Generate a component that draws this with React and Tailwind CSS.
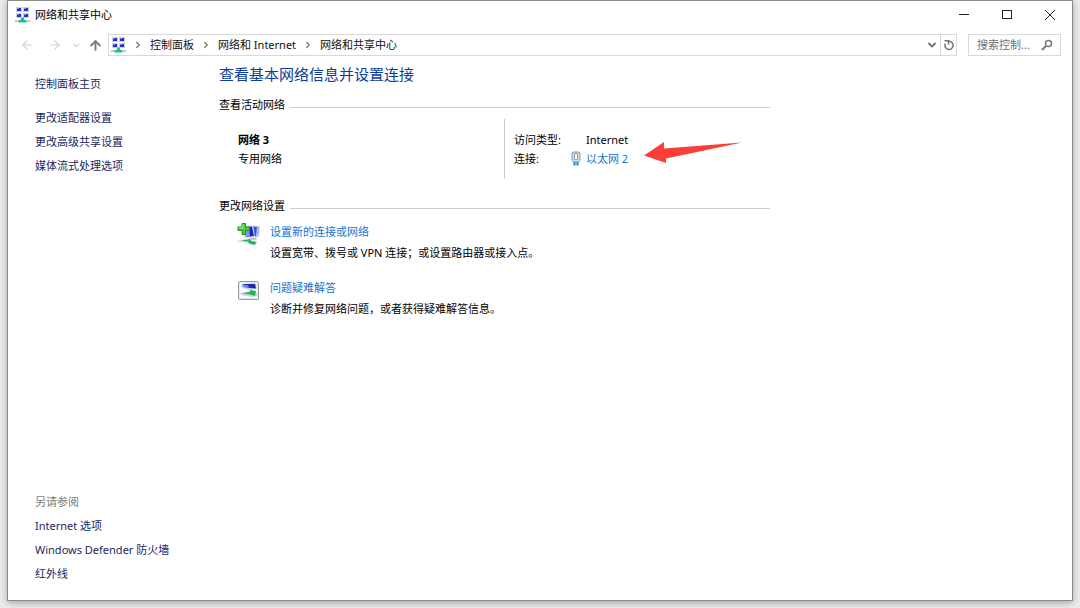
import { ArrowLeft, ArrowRight, ArrowUp, ChevronDown, ChevronRight } from 'lucide-react'

const NAV_LINKS = ['更改适配器设置', '更改高级共享设置', '媒体流式处理选项']
const SEE_ALSO = ['Internet 选项', 'Windows Defender 防火墙', '红外线']
const CRUMBS = ['控制面板', '网络和 Internet', '网络和共享中心']

const TASKS = [
  { icon: NewConnectionIcon, title: '设置新的连接或网络', text: '设置宽带、拨号或 VPN 连接；或设置路由器或接入点。' },
  { icon: TroubleshootIcon, title: '问题疑难解答', text: '诊断并修复网络问题，或者获得疑难解答信息。' },
]

function NetworkIcon() {
  return (
    <svg viewBox="0 0 15 16" className="h-4 w-[15px] shrink-0" aria-hidden="true">
      {[[1, 0], [8, 0], [1, 6], [8, 6]].map(([x, y]) => (
        <g key={`${x}-${y}`}>
          <rect x={x} y={y} width="6" height="5" fill="#c9d1e6" />
          <rect x={x + 1} y={y + 1} width="4" height="3" fill="#2630c4" />
          <rect x={x + 1} y={y + 1} width="2" height="1" fill="#7d8ff0" />
        </g>
      ))}
      <rect x="0" y="13" width="15" height="2" fill="#c3cac8" />
      <path d="M6 10.5h3v2l2.5 1.5v1.5h-8V14L6 12.5z" fill="#14c877" />
    </svg>
  )
}

function NewConnectionIcon() {
  return (
    <svg viewBox="0 0 24 24" className="mt-px size-6 shrink-0" aria-hidden="true">
      <path d="M14 3l9 1-1 11-6 1z" fill="#d3d9ea" />
      <path d="M15 4.500l7 .5-1 9-5 .5z" fill="#3a50d8" />
      <path d="M20 5l2 .2-1 8.800-2 .2z" fill="#b4c3f6" />
      <path d="M5 4l11-1 2 12-10 1.500z" fill="#dfe3f1" />
      <path d="M7 5l8-.5L17 14l-8 1z" fill="#1a25c4" />
      <path d="M8 9l4-3 1 8.500-4 .5z" fill="#8097ee" />
      <path d="M11 16.500l6-1 4 1.500-6 1.500z" fill="#c2c8d2" />
      <path d="M1 18l6-.5 13 1.500v2.500l-5 2-5-2.500-9-1z" fill="#dbe0e0" />
      <path d="M4 18.500l9-1.500 1 2 5 1-1 3-7-2 1-1.300z" fill="#20b15a" />
      <path d="M5 1.500h3.500V5h4v3.500h-4v4H5v-4H1V5h4z" fill="#4bc93a" stroke="#239420" />
      <path d="M6 2.500V6H2" fill="none" stroke="#a6f18a" />
    </svg>
  )
}

function TroubleshootIcon() {
  return (
    <svg viewBox="0 0 24 24" className="mt-px size-6 shrink-0" aria-hidden="true">
      <rect x="1.500" y="3.500" width="20" height="18" rx="1" fill="#e6e9ec" stroke="#979ca3" />
      <rect x="3" y="5" width="17" height="15" fill="#fbfcfd" />
      <path d="M4 6l15-1 1 6-7 1-8-2z" fill="#c6d0f0" />
      <path d="M6 6h12l1 4.500-6-.5-6-1z" fill="#1d28b4" />
      <path d="M5 6.500l6 .5 1 2.500-5-.5z" fill="#6e83dd" />
      <path d="M3 15l9-2 8 2v3l-6 1-10-2z" fill="#d0d8d8" />
      <path d="M5 15.500l8-1.500v-2l6 1-1 5-5-1.500z" fill="#1fb454" />
    </svg>
  )
}

function EthernetIcon() {
  return (
    <svg viewBox="0 0 10 16" className="h-4 w-[10px] shrink-0" aria-hidden="true">
      <path d="M2 1h6l1 1v7.500L7.500 11h-5L1 9.500V2z" fill="#d3dee8" stroke="#8496a8" />
      <path d="M3.500 2.500h3v6h-3z" fill="#fff" stroke="#8b9cac" />
      <path d="M3.500 11v3.500M6.500 11v3.500" stroke="#188cc0" strokeWidth="2" />
      <path d="M5 10.500v3" stroke="#62cbe5" />
    </svg>
  )
}

function RefreshIcon() {
  return (
    <svg viewBox="0 0 12 12" className="size-3" fill="none" stroke="currentColor" strokeWidth="1.500" aria-hidden="true">
      <path d="M2.500 4.500A4 4 0 1 0 8.500 3.200L6 2" />
      <path d="M1.500 1.700H5.500V5.500" />
    </svg>
  )
}

function SearchIcon() {
  return (
    <svg viewBox="0 0 12 12" className="size-3" fill="none" stroke="#777" aria-hidden="true">
      <circle cx="7.500" cy="4.500" r="3" strokeWidth="1.500" />
      <path d="M5 7L1 11" strokeWidth="2" />
    </svg>
  )
}

function TitleBar() {
  return (
    <header className="flex h-7 items-center justify-between pl-[7px] pr-4">
      <div className="flex items-center gap-[5px]">
        <NetworkIcon />
        <h1>网络和共享中心</h1>
      </div>
      <div className="flex items-center gap-[31px] text-[#222]">
        <button type="button" aria-label="最小化">
          <svg viewBox="0 0 12 12" className="size-3" stroke="currentColor" aria-hidden="true">
            <path d="M1 5.500h10" />
          </svg>
        </button>
        <button type="button" aria-label="最大化">
          <svg viewBox="0 0 12 12" className="size-3" fill="none" stroke="currentColor" aria-hidden="true">
            <rect x="1.500" y="1.500" width="9" height="8" />
          </svg>
        </button>
        <button type="button" aria-label="关闭">
          <svg viewBox="0 0 12 12" className="size-3" stroke="currentColor" aria-hidden="true">
            <path d="M1 1l10 10M11 1L1 11" />
          </svg>
        </button>
      </div>
    </header>
  )
}

function AddressBar() {
  return (
    <div className="mt-[5px] flex h-[22px] items-center pl-3 pr-[11px]">
      <div className="flex w-[88px] shrink-0 items-center">
        <button type="button" aria-label="后退" className="w-7 text-[#cfcfcf]"><ArrowLeft size={14} /></button>
        <button type="button" aria-label="前进" className="w-6 text-[#cfcfcf]"><ArrowRight size={14} /></button>
        <button type="button" aria-label="最近浏览的位置" className="w-4 text-[#cfcfcf]"><ChevronDown size={9} strokeWidth={3} /></button>
        <button type="button" aria-label="上移" className="text-[#777]"><ArrowUp size={15} strokeWidth={3} /></button>
      </div>
      <div className="flex h-full flex-1 items-center border border-[#d9d9d9] pl-[2px]">
        <NetworkIcon />
        <nav className="flex flex-1 items-center" aria-label="路径">
          {CRUMBS.map((crumb) => (
            <span key={crumb} className="flex items-center">
              <ChevronRight size={10} strokeWidth={3} className="mx-[7px] text-[#777]" />
              <a href="#" className="text-[#111]">{crumb}</a>
            </span>
          ))}
        </nav>
        <button type="button" aria-label="历史记录" className="px-[2px] text-[#777]"><ChevronDown size={12} strokeWidth={4} /></button>
        <button type="button" aria-label="刷新" className="flex h-full w-4 items-center justify-center border-l border-[#d9d9d9] text-[#777]">
          <RefreshIcon />
        </button>
      </div>
      <form className="ml-[11px] flex h-full w-[93px] shrink-0 items-center border border-[#d9d9d9] pl-2 pr-[7px]">
        <input
          type="text"
          aria-label="搜索控制面板"
          placeholder="搜索控制..."
          className="min-w-0 flex-1 outline-none placeholder:text-[#707070]"
        />
        <button type="button" aria-label="搜索"><SearchIcon /></button>
      </form>
    </div>
  )
}

function Sidebar() {
  return (
    <aside className="flex w-[211px] shrink-0 flex-col justify-between pb-[14px] pl-[27px] pt-4 leading-6 text-[#1b1f5e]">
      <nav>
        <a href="#" className="mb-[10px] block">控制面板主页</a>
        {NAV_LINKS.map((link) => (
          <a key={link} href="#" className="block">{link}</a>
        ))}
      </nav>
      <nav>
        <h2 className="text-[#7d7d7d]">另请参阅</h2>
        {SEE_ALSO.map((link) => (
          <a key={link} href="#" className="block">{link}</a>
        ))}
      </nav>
    </aside>
  )
}

function SectionHeading({ children }) {
  return (
    <div className="flex items-center gap-[5px] leading-5">
      <h3>{children}</h3>
      <div className="mt-[5px] h-px flex-1 bg-[#cfcfcf]" />
    </div>
  )
}

function ActiveNetwork() {
  return (
    <div className="mt-1 flex h-[60px] items-center leading-[19px]">
      <div className="flex-1 pl-[19px]">
        <p className="font-bold">网络 3</p>
        <p>专用网络</p>
      </div>
      <div className="flex h-full w-[266px] items-center border-l border-[#c8c8c8] pl-[9px]">
        <dl className="grid grid-cols-[57px_auto]">
          <dt>访问类型:</dt>
          <dd className="pl-[15px]">Internet</dd>
          <dt>连接:</dt>
          <dd className="flex items-center gap-[5px]">
            <EthernetIcon />
            <a href="#" className="text-[#1474d0]">以太网 2</a>
          </dd>
        </dl>
        <svg viewBox="0 0 98 22" className="ml-4 mt-2 h-[22px] w-[98px]" aria-hidden="true">
          <path d="M0 13.500L20 0v6.500L98 .5 22 16.500V21z" fill="#fc3d39" />
        </svg>
      </div>
    </div>
  )
}

export default function App() {
  return (
    <div className="flex h-screen bg-[#ececec] px-[7px] pb-[7px] font-['Noto_Sans','Noto_Sans_CJK_SC',sans-serif] text-[11px] leading-5 text-black">
      <div className="flex flex-1 flex-col border border-[#8a8a8a] bg-white shadow-[0_2px_7px_rgba(0,0,0,0.3)]">
        <TitleBar />
        <AddressBar />
        <div className="flex flex-1">
          <Sidebar />
          <main className="max-w-[551px] flex-1 pt-[6px]">
            <h2 className="text-[15px] leading-6 text-[#0c3c9c]">查看基本网络信息并设置连接</h2>
            <section className="mt-[9px]">
              <SectionHeading>查看活动网络</SectionHeading>
              <ActiveNetwork />
            </section>
            <section className="mt-[17px]">
              <SectionHeading>更改网络设置</SectionHeading>
              <ul className="mt-[5px] flex flex-col gap-[14px] pl-[18px] leading-[21px]">
                {TASKS.map(({ icon: Icon, title, text }) => (
                  <li key={title} className="flex gap-[9px]">
                    <Icon />
                    <div>
                      <a href="#" className="block text-[#1474d0]">{title}</a>
                      <p>{text}</p>
                    </div>
                  </li>
                ))}
              </ul>
            </section>
          </main>
        </div>
      </div>
    </div>
  )
}
